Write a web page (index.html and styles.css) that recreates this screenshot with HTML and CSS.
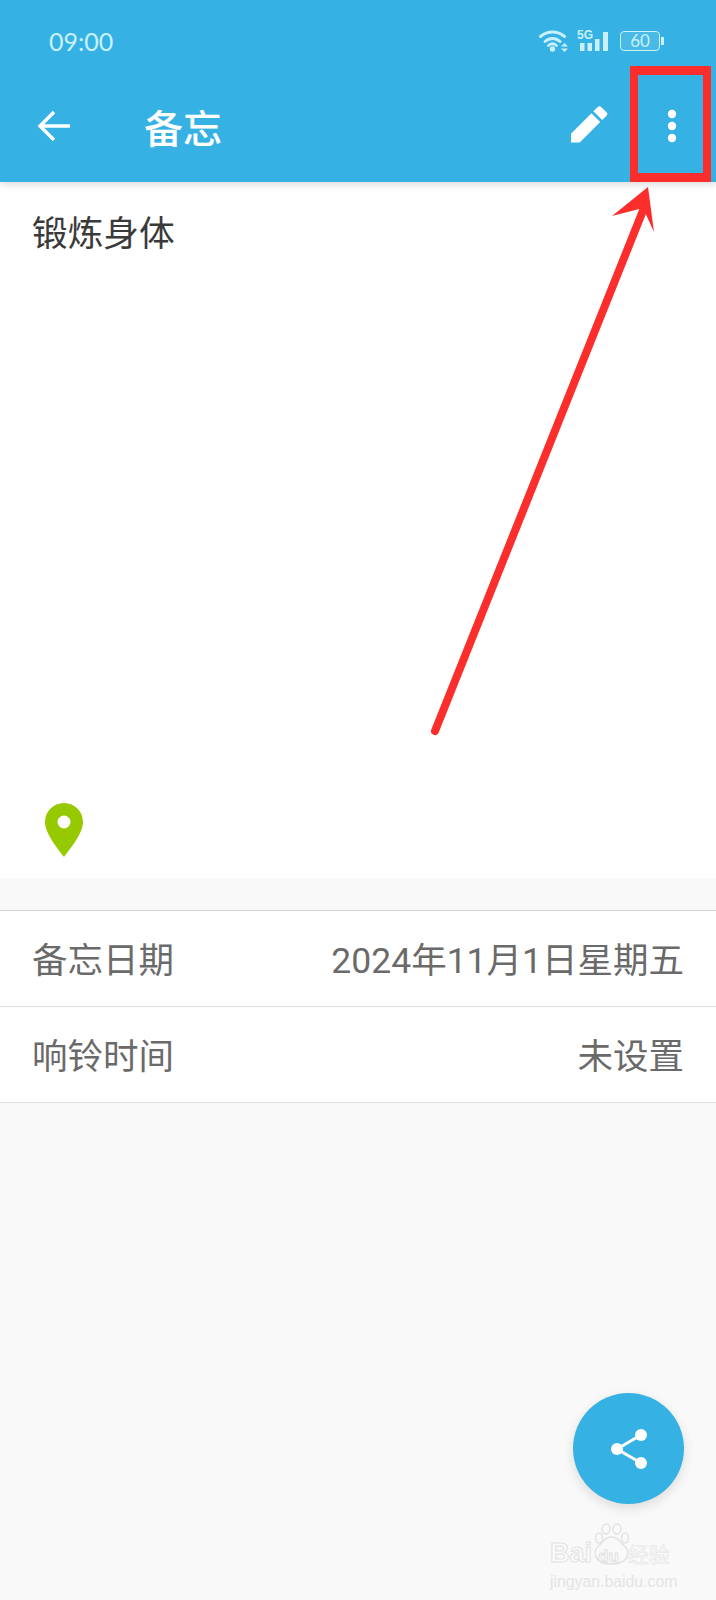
FILE: index.html
```html
<!DOCTYPE html>
<html lang="zh-CN">
<head>
<meta charset="utf-8">
<title>备忘</title>
<link rel="stylesheet" href="styles.css">
</head>
<body>
<div class="page">
  <header class="header">
    <div class="status">
      <span class="time">09:00</span>
      <div class="status-icons">
        <svg class="ic-wifi" width="29" height="22" viewBox="0 0 29 22">
          <g fill="none" stroke="#c9f1fb" stroke-width="3" stroke-linecap="round">
            <path d="M1.500 6.500C8.500 0.500 18.500 0.500 25.500 6.500"/>
            <path d="M6 11.500C10.500 7.500 16.500 7.500 21 11.500"/>
          </g>
          <path d="M9.500 15.500C12 13.300 15 13.300 17.500 15.500" fill="none" stroke="#c9f1fb" stroke-width="2.800" stroke-linecap="round"/>
          <circle cx="13.500" cy="19" r="2.700" fill="#c9f1fb"/>
          <path d="M22 16.500h7l-3.500-3.500zM22 18.500h7l-3.500 3.500z" fill="#c9f1fb"/>
        </svg>
        <div class="signal">
          <span class="five-g">5G</span>
          <svg width="28" height="22" viewBox="0 0 28 22">
            <g fill="#c9f1fb">
              <rect x="0" y="13" width="4.500" height="8"/>
              <rect x="7.500" y="13" width="4.500" height="8"/>
              <rect x="15" y="9" width="4.500" height="12"/>
              <rect x="23" y="2" width="5" height="19"/>
            </g>
          </svg>
        </div>
        <div class="battery"><span class="battery-body">60</span><span class="battery-cap"></span></div>
      </div>
    </div>
    <div class="toolbar">
      <svg class="back" width="34" height="32" viewBox="0 0 34 32">
        <path d="M33 16H3M17 2L3 16l14 14" fill="none" stroke="#fff" stroke-width="3.400"/>
      </svg>
      <h1 class="title">备忘</h1>
      <svg class="edit" width="37" height="38" viewBox="0 0 38 38">
        <path d="M0 38V29L21 8l9 9L9 38zM23 6l4.500-4.500a2.500 2.500 0 0 1 3.500 0l5.500 5.500a2.500 2.500 0 0 1 0 3.500L32 15z" fill="#fff"/>
      </svg>
      <svg class="more" width="10" height="34" viewBox="0 0 10 34">
        <circle cx="5" cy="5" r="4.200" fill="#fff"/>
        <circle cx="5" cy="17" r="4.200" fill="#fff"/>
        <circle cx="5" cy="29" r="4.200" fill="#fff"/>
      </svg>
    </div>
  </header>

  <section class="note">
    <p class="note-text">锻炼身体</p>
    <svg class="pin" width="38" height="54" viewBox="0 0 38 54">
      <path fill-rule="evenodd" d="M19 0C8.500 0 0 8.500 0 19c0 12 14 28 19 35 5-7 19-23 19-35C38 8.500 29.500 0 19 0zm0 12.500a6.500 6.500 0 1 1 0 13 6.500 6.500 0 0 1 0-13z" fill="#96c900"/>
    </svg>
  </section>

  <section class="list">
    <div class="row"><span>备忘日期</span><span>2024年11月1日星期五</span></div>
    <div class="row"><span>响铃时间</span><span>未设置</span></div>
  </section>

  <button class="fab" type="button" aria-label="分享">
    <svg width="36" height="40" viewBox="0 0 36 40">
      <path d="M30 6L6 20l24 14" fill="none" stroke="#fff" stroke-width="3"/>
      <circle cx="30" cy="6" r="6" fill="#fff"/>
      <circle cx="6" cy="20" r="6" fill="#fff"/>
      <circle cx="30" cy="34" r="6" fill="#fff"/>
    </svg>
  </button>

  <div class="watermark">
    <svg class="paw" width="40" height="44" viewBox="0 0 40 44">
      <g fill="none" stroke="#e2e2e2" stroke-width="1.500">
        <ellipse cx="7" cy="15" rx="3.500" ry="5"/>
        <ellipse cx="14" cy="6" rx="4" ry="5"/>
        <ellipse cx="25" cy="6" rx="4" ry="5"/>
        <ellipse cx="33" cy="15" rx="3.500" ry="5"/>
        <path d="M19.500 14c-6 0-8 4-12 8-4 3-6 8-3 13 3 5 8 6 15 6s12-1 15-6c3-5 1-10-3-13-4-4-6-8-12-8z"/>
      </g>
    </svg>
    <div class="wm-main"><span class="wm-bai">Bai</span><span class="wm-du">du</span><span class="wm-cn">经验</span></div>
    <div class="wm-url">jingyan.baidu.com</div>
  </div>

  <div class="mark-box"></div>
  <svg class="mark-arrow" width="716" height="760" viewBox="0 0 716 760">
    <path d="M435 731L644 208" fill="none" stroke="#fb2e2c" stroke-width="8" stroke-linecap="round"/>
    <path d="M648 187L654 232 643 208 612 216z" fill="#fb2e2c"/>
  </svg>
</div>
</body>
</html>
```
FILE: styles.css
```css
* { box-sizing: border-box; }
html, body { margin: 0; padding: 0; }
body {
  font-family: Roboto, "Noto Sans CJK SC", sans-serif;
  background: #f9f9f9;
}
.page {
  position: relative;
  width: 716px;
  height: 1600px;
  overflow: hidden;
  background: #f9f9f9;
  display: flex;
  flex-direction: column;
}
.header {
  position: relative;
  z-index: 1;
  height: 182px;
  background: #35b1e4;
  box-shadow: 0 2px 8px rgba(0, 0, 0, 0.16);
}
.status {
  height: 70px;
  padding: 24px 52px 0 49px;
  display: flex;
  justify-content: space-between;
  align-items: flex-start;
}
.time {
  font-family: Lato, sans-serif;
  font-size: 25px;
  line-height: 34px;
  color: #c9f1fb;
}
.status-icons {
  display: flex;
  align-items: center;
  gap: 12px;
  padding-top: 6px;
}
.status-icons svg { display: block; }
.signal {
  position: relative;
  width: 28px;
  height: 22px;
}
.five-g {
  position: absolute;
  left: -3px;
  top: 0;
  font-family: "Liberation Sans", sans-serif;
  font-weight: 700;
  font-size: 12px;
  line-height: 10px;
  color: #c9f1fb;
}
.battery {
  display: flex;
  align-items: center;
  gap: 1px;
}
.battery-body {
  width: 40px;
  height: 20px;
  border: 1.500px solid #c9f1fb;
  border-radius: 4px;
  background: rgba(201, 241, 251, 0.14);
  font-family: Lato, sans-serif;
  font-size: 17px;
  line-height: 17px;
  text-align: center;
  color: #c9f1fb;
}
.battery-cap {
  width: 3px;
  height: 8px;
  background: #c9f1fb;
}
.toolbar {
  height: 112px;
  display: flex;
  align-items: center;
  padding: 0 39px 0 37px;
}
.back { flex: none; }
.title {
  margin: 0 0 0 73px;
  flex: 1;
  font-size: 39px;
  line-height: 52px;
  font-weight: 500;
  color: #fff;
  font-family: "Noto Sans CJK SC", sans-serif;
}
.edit { flex: none; margin-right: 59px; margin-top: -4px; }
.more { flex: none; }
.note {
  height: 696px;
  background: #fff;
  padding: 24px 32px 21px 45px;
  display: flex;
  flex-direction: column;
  justify-content: space-between;
  align-items: flex-start;
}
.note-text {
  margin: 0 0 0 -13px;
  font-family: "Noto Sans CJK SC", sans-serif;
  font-size: 35.700px;
  line-height: 50px;
  color: #3a3a3a;
}
.list {
  margin-top: 32px;
  background: #fff;
  border-top: 1px solid #d6d6d6;
}
.row {
  height: 96px;
  padding: 0 32px 3px;
  display: flex;
  align-items: center;
  justify-content: space-between;
  border-bottom: 1px solid #dedede;
  font-size: 35.500px;
  color: #6a6a6a;
}
.fab {
  position: absolute;
  left: 573px;
  top: 1393px;
  width: 111px;
  height: 111px;
  padding: 0;
  border: 0;
  border-radius: 50%;
  background: #35b1e4;
  box-shadow: 0 4px 12px rgba(0, 0, 0, 0.12);
  display: flex;
  align-items: center;
  justify-content: center;
}
.watermark {
  position: absolute;
  left: 550px;
  top: 1523px;
  width: 130px;
  color: #fafafa;
}
.paw {
  position: absolute;
  left: 42px;
  top: 0;
}
.wm-main {
  margin-top: 14px;
  display: flex;
  align-items: baseline;
  font-family: "Liberation Sans", sans-serif;
  line-height: 32px;
  -webkit-text-stroke: 1px #e2e2e2;
}
.wm-bai { font-size: 27px; font-weight: 700; }
.wm-du { font-size: 17px; font-weight: 700; margin: 0 9px 0 6px; }
.wm-cn {
  font-family: "Noto Sans CJK SC", sans-serif;
  font-size: 21px;
  -webkit-text-stroke: 0.500px #e2e2e2;
}
.wm-url {
  font-family: "Liberation Sans", sans-serif;
  font-size: 15.800px;
  line-height: 18px;
  white-space: nowrap;
  color: #e4e4e4;
}
.mark-box {
  position: absolute;
  z-index: 2;
  left: 630px;
  top: 66px;
  width: 81px;
  height: 116px;
  border: 8px solid #fb2e2c;
  border-top-width: 9px;
  border-bottom-width: 9px;
}
.mark-arrow {
  position: absolute;
  z-index: 2;
  left: 0;
  top: 0;
  pointer-events: none;
}
```
